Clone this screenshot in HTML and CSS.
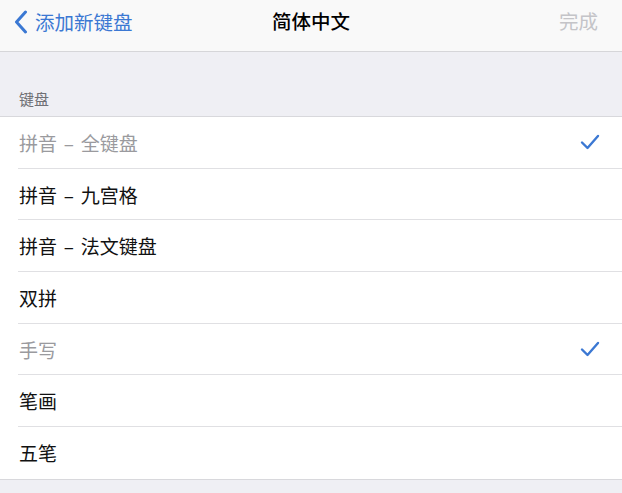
FILE: index.html
```html
<!DOCTYPE html>
<html lang="zh-CN">
<head>
  <meta charset="UTF-8">
  <meta name="viewport" content="width=device-width, initial-scale=1.0">
  <title>简体中文</title>
  <link rel="stylesheet" href="styles.css">
</head>
<body>

  <header class="navbar">
    <a class="back" href="#">
      <svg class="chevron" width="14" height="24" viewBox="0 0 14 24">
        <path d="M11.5 2 L2.5 12 L11.5 22" fill="none" stroke="currentColor" stroke-width="3" stroke-linecap="round" stroke-linejoin="round"/>
      </svg>
      <span>添加新键盘</span>
    </a>
    <h1 class="title">简体中文</h1>
    <span class="done">完成</span>
  </header>

  <main>
    <p class="section-title">键盘</p>
    <ul class="list">
      <li class="row is-added"><span>拼音 – 全键盘</span><span class="check"></span></li>
      <li class="row"><span>拼音 – 九宫格</span></li>
      <li class="row"><span>拼音 – 法文键盘</span></li>
      <li class="row"><span>双拼</span></li>
      <li class="row is-added"><span>手写</span><span class="check"></span></li>
      <li class="row"><span>笔画</span></li>
      <li class="row"><span>五笔</span></li>
    </ul>
  </main>

  <script>
    // draw a checkmark into every added keyboard row
    document.querySelectorAll('.check').forEach(el => {
      el.innerHTML = `
        <svg width="20" height="16" viewBox="0 0 20 16">
          <path d="M2 8.5 L7.5 14 L18 2" fill="none" stroke="currentColor" stroke-width="2.4" stroke-linecap="round" stroke-linejoin="round"/>
        </svg>`;
    });
  </script>

</body>
</html>
```

FILE: styles.css
```css
body {
  font-family: "Noto Sans CJK SC", "Noto Sans", sans-serif;
  background-color: #efeff4;
  margin: 0;
  padding: 0;
  width: 622px;
  height: 493px;
  overflow: hidden;
}

.navbar {
  height: 52px;
  box-sizing: border-box;
  background-color: #f9f9f9;
  border-bottom: 1px solid #d6d6d9;
  display: flex;
  align-items: flex-start;
  justify-content: space-between;
  padding: 0 24px 0 14px;
  position: relative;
}

.back {
  display: flex;
  align-items: center;
  gap: 7px;
  color: #3b78d3;
  text-decoration: none;
  font-size: 19.5px;
  height: 42px;
}

.chevron {
  margin-top: 1px;
}

.title {
  position: absolute;
  left: 0;
  right: 0;
  top: 0;
  margin: 0;
  height: 42px;
  line-height: 42px;
  text-align: center;
  font-size: 19.5px;
  font-weight: 500;
  color: #000;
  pointer-events: none;
}

.done {
  font-size: 19.5px;
  color: #c4c4c8;
  height: 42px;
  line-height: 42px;
}

main {
  padding-top: 37px;
}

.section-title {
  margin: 0 0 7px 19px;
  font-size: 15px;
  color: #707075;
  line-height: 20px;
}

.list {
  list-style: none;
  margin: 0;
  padding: 0 0 0 18px;
  background-color: #fff;
  border-top: 1px solid #d8d8dc;
  border-bottom: 1px solid #d8d8dc;
}

.row {
  display: flex;
  align-items: center;
  justify-content: space-between;
  height: 51.7px;
  box-sizing: border-box;
  padding: 0 22px 0 1px;
  font-size: 19px;
  color: #111;
  word-spacing: 2.5px;
  border-bottom: 1px solid #e0e0e3;
}

.row:last-child {
  border-bottom: none;
}

.row.is-added {
  color: #9a9a9e;
}

.check {
  color: #3b78d3;
  display: flex;
}
```
